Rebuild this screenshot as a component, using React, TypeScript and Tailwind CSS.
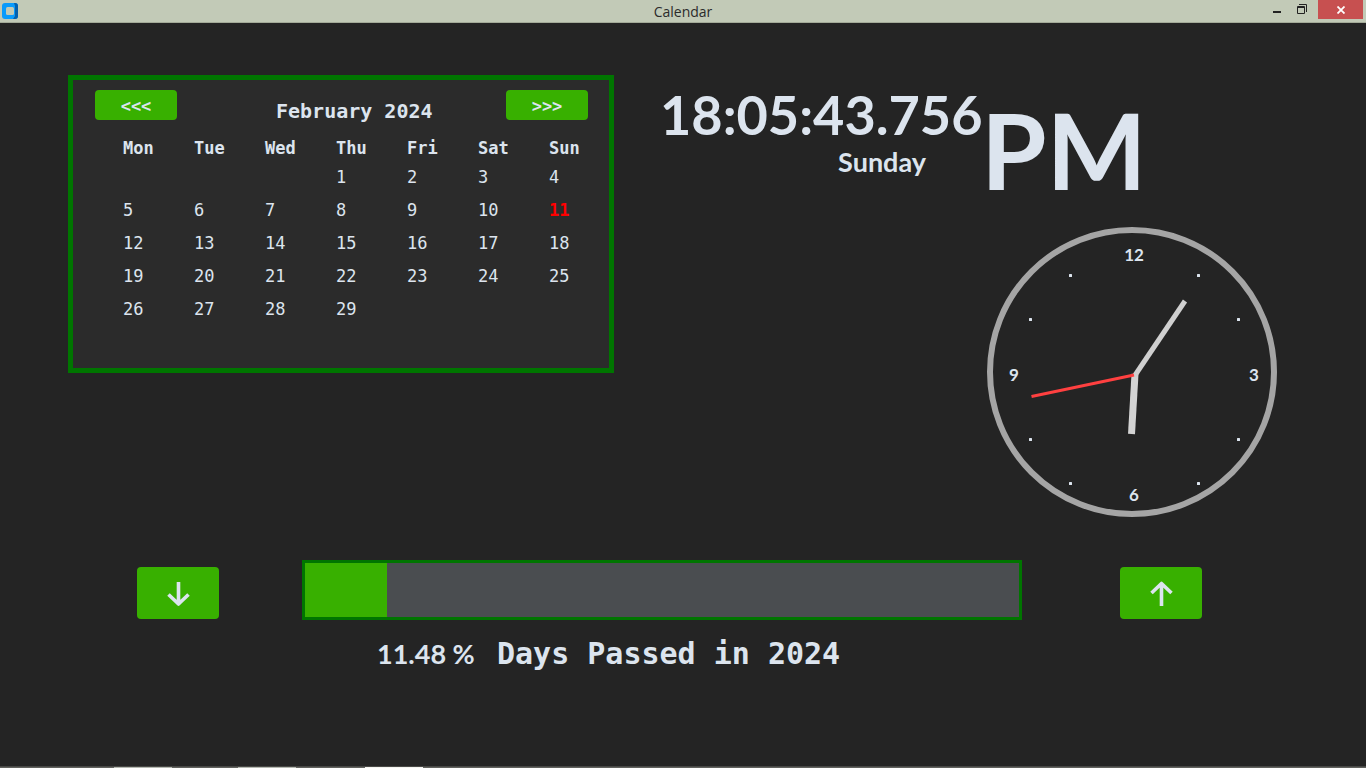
const weekdays = ["Mon", "Tue", "Wed", "Thu", "Fri", "Sat", "Sun"];

const weeks: (number | null)[][] = [
  [null, null, null, 1, 2, 3, 4],
  [5, 6, 7, 8, 9, 10, 11],
  [12, 13, 14, 15, 16, 17, 18],
  [19, 20, 21, 22, 23, 24, 25],
  [26, 27, 28, 29, null, null, null],
];

const today = 11;
const percentPassed = 11.48;

const hourDots = [
  [211, 48], [251, 92], [251, 212], [211, 256],
  [83, 256], [43, 212], [43, 92], [83, 48],
];

function TitleBar() {
  return (
    <header className="grid h-[23px] grid-cols-[1fr_auto_1fr] border-b border-[#a4ab99] bg-[#c2cab7] text-[#2b2b2b]">
      <div className="pt-[3px] pl-[2px]">
        <svg width="16" height="16" viewBox="0 0 16 16" aria-hidden="true">
          <rect width="16" height="16" rx="3" fill="#0a9bfb" />
          <path d="M12 0h1a3 3 0 0 1 3 3v10a3 3 0 0 1-3 3h-2l2-3V3z" fill="#0560ad" />
          <rect x="4" y="4" width="8" height="8" rx="1.5" fill="#c2cab7" />
        </svg>
      </div>
      <h1 className="font-['Open_Sans',sans-serif] text-sm leading-[23px]">Calendar</h1>
      <div className="flex items-start justify-end pr-[3px]">
        <button aria-label="Minimize" className="flex h-[19px] w-[26px] justify-center">
          <svg width="8" height="19" aria-hidden="true"><rect y="11" width="8" height="2" fill="#222" /></svg>
        </button>
        <button aria-label="Restore" className="flex h-[19px] w-[28px] pl-[7px]">
          <svg width="10" height="19" fill="none" stroke="#222" aria-hidden="true">
            <path d="M2 4.5h7.5V12" />
            <path d="M.5 6.5h7v7h-7zM0 7.5h8" />
          </svg>
        </button>
        <button aria-label="Close" className="flex h-[19px] w-[45px] items-center justify-center bg-[#c75050]">
          <svg width="8" height="8" stroke="#fff" strokeWidth="1.8" aria-hidden="true">
            <path d="M.5 .5l7 7M7.5 .5l-7 7" />
          </svg>
        </button>
      </div>
    </header>
  );
}

function MonthCalendar() {
  return (
    <section className="h-[298px] w-[546px] shrink-0 border-5 border-[#007500] bg-[#2b2b2b] font-['DejaVu_Sans_Mono',monospace]">
      <div className="flex pt-[10px] pr-[21px] pl-[22px]">
        <button aria-label="Previous month" className="h-[30px] w-[82px] rounded-[4px] bg-[#38b000] text-[17px] leading-[32px] font-bold">
          {"<<<"}
        </button>
        <h2 className="grow pt-[6px] pl-[99px] text-xl leading-[30px] font-bold">February 2024</h2>
        <button aria-label="Next month" className="h-[30px] w-[82px] rounded-[4px] bg-[#38b000] text-[17px] leading-[32px] font-bold">
          {">>>"}
        </button>
      </div>
      <div className="pt-[10px] pl-[50px]">
        <table className="w-full table-fixed text-left text-[17px]">
          <colgroup>
            <col span={6} className="w-[71px]" />
            <col />
          </colgroup>
          <thead>
            <tr className="h-[25px]">
              {weekdays.map((day) => (
                <th key={day} className="p-0 font-bold">{day}</th>
              ))}
            </tr>
          </thead>
          <tbody>
            {weeks.map((week, i) => (
              <tr key={i} className="h-[33px]">
                {week.map((day, j) => (
                  <td key={j} className={day === today ? "p-0 font-bold text-[#ff0000]" : "p-0"}>{day}</td>
                ))}
              </tr>
            ))}
          </tbody>
        </table>
      </div>
    </section>
  );
}

function AnalogClock() {
  return (
    <svg width="290" height="290" viewBox="0 0 290 290" role="img" aria-label="Analog clock">
      <circle cx="145" cy="145" r="142" fill="none" stroke="#a5a5a5" strokeWidth="6" />
      {hourDots.map(([x, y]) => (
        <rect key={`${x}-${y}`} x={x - 1} y={y - 1} width="3" height="3" rx="0.5" fill="#dce4ee" />
      ))}
      <g className="font-['Lato',sans-serif] text-[17px] font-bold" fill="#dce4ee" textAnchor="middle">
        <text x="147" y="34">12</text>
        <text x="267" y="154">3</text>
        <text x="147" y="274">6</text>
        <text x="27" y="154">9</text>
      </g>
      <path d="M148 147L144.500 207" stroke="#d3d3d3" strokeWidth="7" />
      <path d="M147.500 149L198 74" stroke="#d0d0d0" strokeWidth="5" />
      <path d="M147 148L44.500 169.500" stroke="#ff4040" strokeWidth="3" />
    </svg>
  );
}

function StepButton({ direction }: { direction: "down" | "up" }) {
  return (
    <button
      aria-label={direction === "down" ? "Scroll down" : "Scroll up"}
      className="flex h-[52px] w-[82px] shrink-0 items-center justify-center rounded-[4px] bg-[#38b000]"
    >
      <svg width="24" height="26" viewBox="0 0 24 26" fill="none" stroke="#dce4ee" strokeWidth="3.6" strokeLinejoin="round" aria-hidden="true">
        {direction === "down" ? (
          <path d="M12.5 2v22M2.500 14.500l10 9.500 10-9.500" />
        ) : (
          <path d="M12.500 26V4M2.500 13L12.500 3.500l10 9.500" />
        )}
      </svg>
    </button>
  );
}

export default function App() {
  return (
    <div className="flex min-h-screen flex-col bg-[#242424] text-[#dce4ee]">
      <TitleBar />
      <main className="flex grow flex-col">
        <div className="flex items-start pt-[52px] pl-[68px]">
          <MonthCalendar />
          <section className="grid grid-cols-[auto_auto] pl-[46px] font-['Lato',sans-serif] font-bold">
            <div className="w-[327px] pt-[10px]">
              <time className="block text-[54px] leading-[60px]">18:05:43.756</time>
              <p className="pr-[61px] text-right text-[27px] leading-[34px]">Sunday</p>
            </div>
            <p className="-ml-[6px] h-[152px] pt-[18px] text-[106px] leading-[112px]">PM</p>
            <div className="col-start-2">
              <AnalogClock />
            </div>
          </section>
        </div>
        <div className="flex items-center pt-[43px] pr-[164px] pl-[137px]">
          <div className="pt-[6px]"><StepButton direction="down" /></div>
          <div
            role="progressbar"
            aria-label="Days passed"
            aria-valuenow={percentPassed}
            className="mr-[98px] ml-[83px] h-[60px] grow border-3 border-[#007500] bg-[#4a4d50]"
          >
            <div className="h-full bg-[#38b000]" style={{ width: `${percentPassed}%` }} />
          </div>
          <div className="pt-[6px]"><StepButton direction="up" /></div>
        </div>
        <div className="flex items-center pt-[14px] pl-[377px] font-bold">
          <p className="w-[120px] font-['Lato',sans-serif] text-[27px] leading-[40px]">{percentPassed} %</p>
          <p className="font-['DejaVu_Sans_Mono',monospace] text-3xl leading-[40px]">Days Passed in 2024</p>
        </div>
      </main>
      <footer className="flex h-[2px] border-t border-[#484846] bg-[#61625e] pl-[114px]">
        <div className="mr-[66px] w-[58px] bg-[#b4b8b0]" />
        <div className="mr-[69px] w-[58px] bg-[#b4b8b0]" />
        <div className="w-[58px] bg-[#f4f4f0]" />
      </footer>
    </div>
  );
}
